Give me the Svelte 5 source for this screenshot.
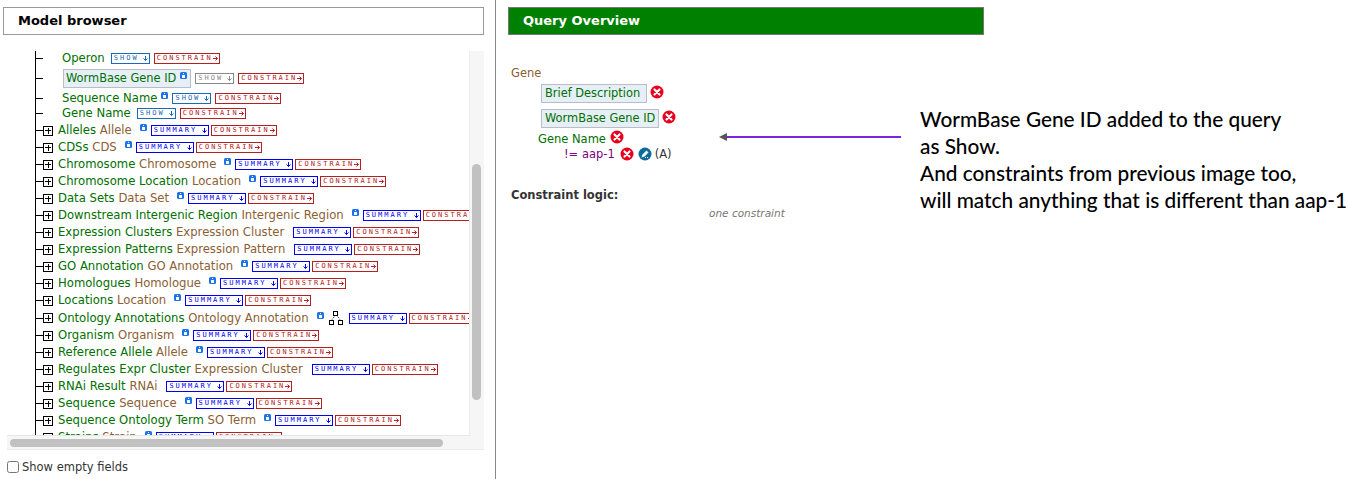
<script lang="ts">
	type Row = { name: string; type?: string; info?: boolean; leaf?: boolean; show?: string; boxed?: boolean; graph?: boolean; h?: number };

	const rows: Row[] = [
		{ name: 'Operon', leaf: true, show: 'blue', h: 15 },
		{ name: 'WormBase Gene ID', leaf: true, info: true, show: 'grey', boxed: true, h: 25 },
		{ name: 'Sequence Name', leaf: true, info: true, show: 'blue', h: 14 },
		{ name: 'Gene Name', leaf: true, show: 'blue', h: 17 },
		{ name: 'Alleles', type: 'Allele', info: true },
		{ name: 'CDSs', type: 'CDS', info: true },
		{ name: 'Chromosome', type: 'Chromosome', info: true },
		{ name: 'Chromosome Location', type: 'Location', info: true },
		{ name: 'Data Sets', type: 'Data Set', info: true },
		{ name: 'Downstream Intergenic Region', type: 'Intergenic Region', info: true },
		{ name: 'Expression Clusters', type: 'Expression Cluster' },
		{ name: 'Expression Patterns', type: 'Expression Pattern' },
		{ name: 'GO Annotation', type: 'GO Annotation', info: true },
		{ name: 'Homologues', type: 'Homologue', info: true },
		{ name: 'Locations', type: 'Location', info: true },
		{ name: 'Ontology Annotations', type: 'Ontology Annotation', info: true, graph: true, h: 18 },
		{ name: 'Organism', type: 'Organism', info: true },
		{ name: 'Reference Allele', type: 'Allele', info: true },
		{ name: 'Regulates Expr Cluster', type: 'Expression Cluster' },
		{ name: 'RNAi Result', type: 'RNAi' },
		{ name: 'Sequence', type: 'Sequence', info: true },
		{ name: 'Sequence Ontology Term', type: 'SO Term', info: true },
		{ name: 'Strains', type: 'Strain', info: true }
	];
</script>

{#snippet info()}
	<svg class="info" width="7" height="7" viewBox="0 0 7 7" aria-hidden="true">
		<rect width="7" height="7" rx="1.5" fill="#1a73e8" />
		<rect x="3" y="1" width="1" height="1" fill="#fff" />
		<rect x="2" y="3" width="3" height="3" fill="#fff" />
	</svg>
{/snippet}

{#snippet remove()}
	<svg class="icon" width="14" height="14" viewBox="0 0 14 14" aria-hidden="true">
		<circle cx="7" cy="7" r="6.5" fill="#e8001c" />
		<path d="M4.5 4.5l5 5M9.5 4.5l-5 5" stroke="#fff" stroke-width="2.2" stroke-linecap="round" />
	</svg>
{/snippet}

{#snippet down()}
	<svg class="glyph" width="5" height="5" viewBox="0 0 5 5" aria-hidden="true">
		<path d="M2.5 0v4.5M0.5 2.5l2 2 2-2" stroke="currentColor" fill="none" />
	</svg>
{/snippet}

{#snippet right()}
	<svg class="glyph" width="5" height="5" viewBox="0 0 5 5" aria-hidden="true">
		<path d="M0 2.5h4.5M2.5 0.5l2 2-2 2" stroke="currentColor" fill="none" />
	</svg>
{/snippet}

<div class="page">
	<section class="browser">
		<h2 class="title">Model browser</h2>
		<div class="scroller">
			<div class="viewport">
				<ul class="tree">
					{#each rows as row}
						<li class="row" class:leaf={row.leaf} style:height={`${row.h ?? 17}px`}>
							<span class="tick"></span>
							{#if row.leaf}
								<span class="leaf-gap"></span>
							{:else}
								<span class="plus"></span>
							{/if}
							<span class="label" class:boxed={row.boxed}>{row.name}{#if row.type}{' '}<span class="type">{row.type}</span>{/if}{#if row.boxed}{@render info()}{/if}</span>
							{#if row.info && !row.boxed}{@render info()}{/if}
							{#if row.graph}
								<svg class="graph" width="14" height="14" viewBox="0 0 14 14" aria-hidden="true">
									<path d="M6 4.5L2.5 9.5M8 4.5L11.5 9.5" stroke="#222" stroke-dasharray="1 1" fill="none" />
									<rect x="4.5" y="0.5" width="4" height="4" fill="#fff" stroke="#000" />
									<rect x="0.5" y="9.5" width="4" height="4" fill="#fff" stroke="#000" />
									<rect x="9.5" y="9.5" width="4" height="4" fill="#fff" stroke="#000" />
								</svg>
							{/if}
							{#if row.leaf}
								<span class="badge show" class:grey={row.show === 'grey'} class:tight={row.info}>SHOW{@render down()}</span>
							{:else}
								<span class="badge summary" class:tight={row.info && !row.graph} class:after-graph={row.graph}>SUMMARY{@render down()}</span>
							{/if}
							<span class="badge constrain" class:wide-gap={row.leaf}>CONSTRAIN{@render right()}</span>
						</li>
					{/each}
				</ul>
			</div>
			<div class="vtrack"><div class="vthumb"></div></div>
			<div class="htrack"><div class="hthumb"></div></div>
		</div>
		<label class="empty"><input type="checkbox" /> Show empty fields</label>
	</section>

	<section class="overview">
		<h2 class="title green">Query Overview</h2>
		<div class="query">
			<div class="root">Gene</div>
			<div class="view first"><span class="field wide">Brief Description</span>{@render remove()}</div>
			<div class="view second"><span class="field">WormBase Gene ID</span>{@render remove()}</div>
			<div class="gene-name">Gene Name {@render remove()}</div>
			<div class="constraint">
				<span class="op">!= aap-1</span>
				{@render remove()}
				<svg class="icon" width="14" height="14" viewBox="0 0 14 14" aria-hidden="true">
					<circle cx="7" cy="7" r="6.5" fill="#0f6a9e" />
					<path d="M3.5 10.5l1-3 4-4 2 2-4 4z" fill="#fff" />
					<path d="M7 10.5h3.5" stroke="#fff" stroke-dasharray="1 1" />
				</svg>
				<span class="code">(A)</span>
			</div>
			<h3 class="logic">Constraint logic:</h3>
			<p class="one">one constraint</p>

			<div class="callout">
				<div class="arrow"><span class="head"></span><span class="shaft"></span></div>
				<p class="note">
					WormBase Gene ID added to the query<br />
					as Show.<br />
					And constraints from previous image too,<br />
					will match anything that is different than aap-1
				</p>
			</div>
		</div>
	</section>
</div>

<style>
	:global(body) {
		margin: 0;
		background: #fff;
	}
	.page {
		display: flex;
		height: 479px;
		overflow: hidden;
		font-family: 'DejaVu Sans', sans-serif;
		font-size: 11.5px;
	}
	.browser {
		width: 496px;
		flex: none;
		box-sizing: border-box;
		border-right: 1px solid #888;
		padding: 7px 0 0 3px;
	}
	.title {
		box-sizing: border-box;
		width: 481px;
		height: 28px;
		margin: 0;
		padding-left: 14px;
		border: 1px solid #999;
		font-size: 13px;
		line-height: 26px;
		font-weight: bold;
		color: #000;
	}
	.green {
		width: 476px;
		background: #008000;
		color: #fff;
		border-color: #777;
	}
	.scroller {
		display: grid;
		grid-template-columns: 462px 15px;
		grid-template-rows: 385px 14px;
		width: 477px;
		margin: 16px 0 0 4px;
	}
	.viewport {
		overflow: hidden;
		border-bottom: 1px solid #e6e6e6;
	}
	.tree {
		list-style: none;
		width: max-content;
		margin: 0 0 0 28px;
		padding: 0;
		border-left: 1px solid #000;
	}
	.row {
		display: flex;
		align-items: center;
		white-space: nowrap;
		font-size: 11.65px;
		color: #007000;
	}
	.tick {
		width: 7px;
		height: 1px;
		background: #000;
		flex: none;
	}
	.leaf-gap {
		width: 19px;
		flex: none;
	}
	.plus {
		box-sizing: border-box;
		width: 10px;
		height: 10px;
		margin-right: 5px;
		flex: none;
		border: 1px solid #000;
		background:
			linear-gradient(#000, #000) center / 6px 1px no-repeat,
			linear-gradient(#000, #000) center / 1px 6px no-repeat;
	}
	.label {
		line-height: 15px;
	}
	.type {
		color: #8b5e34;
	}
	.boxed {
		display: inline-flex;
		box-sizing: border-box;
		align-items: center;
		height: 19px;
		padding: 0 3px 0 2px;
		margin-left: 1px;
		font-size: 11.4px;
		background: #e6eff8;
		border: 1px solid #b8bfc4;
	}
	.row .boxed :global(.info) {
		margin: -6px 0 0 4px;
	}
	.info {
		flex: none;
		margin: -6px 0 0 8px;
	}
	.leaf .info {
		margin-left: 4px;
	}
	.badge {
		box-sizing: border-box;
		display: inline-flex;
		align-items: center;
		justify-content: space-between;
		flex: none;
		height: 11px;
		margin-left: 6px;
		padding: 0 1px 0 2px;
		border: 1px solid currentColor;
		font-family: 'DejaVu Sans Mono', monospace;
		font-size: 7px;
		line-height: 9px;
		letter-spacing: 2px;
		overflow: hidden;
		background: #fff;
	}
	.summary {
		margin-left: 9px;
	}
	.tight {
		margin-left: 4px;
	}
	.after-graph {
		margin-left: 6px;
	}
	.show {
		width: 39px;
		color: #1b69b8;
	}
	.grey {
		color: #8a8a8a;
	}
	.summary {
		width: 58px;
		color: #0000f0;
	}
	.constrain {
		width: 66px;
		margin-left: 2px;
		color: #b22222;
	}
	.wide-gap {
		margin-left: 4px;
	}
	.glyph {
		flex: none;
	}
	.graph {
		flex: none;
		margin-left: 5px;
	}
	.vtrack {
		background: #f6f6f6;
		border-left: 1px solid #ececec;
		padding: 113px 3px 0 2px;
	}
	.vthumb {
		height: 236px;
		border-radius: 5px;
		background: #c1c1c1;
	}
	.htrack {
		grid-column: 1 / 3;
		box-sizing: border-box;
		background: #f6f6f6;
		border-bottom: 1px solid #ececec;
		padding: 3px 0 0 3px;
	}
	.hthumb {
		width: 433px;
		height: 8px;
		border-radius: 4px;
		background: #c1c1c1;
	}
	.empty {
		display: flex;
		align-items: center;
		gap: 3px;
		margin: 10px 0 0 4px;
		color: #333;
	}
	.empty input {
		width: 12px;
		height: 12px;
		margin: 0;
	}
	.overview {
		flex: 1;
		padding: 7px 0 0 12px;
	}
	.query {
		position: relative;
		padding-top: 31px;
		color: #007000;
	}
	.root {
		margin-left: 3px;
		line-height: 15px;
		color: #8b5e34;
	}
	.view {
		display: flex;
		align-items: center;
		margin-left: 33px;
	}
	.first {
		margin-top: 3px;
	}
	.second {
		margin-top: 6px;
	}
	.field {
		box-sizing: border-box;
		height: 19px;
		padding: 0 3px;
		font-size: 11.4px;
		line-height: 17px;
		background: #e6eff8;
		border: 1px solid #b8bfc4;
	}
	.wide {
		padding: 0 6px 0 3px;
	}
	.view .icon {
		margin: -3px 0 0 3px;
	}
	.gene-name {
		display: flex;
		align-items: center;
		gap: 4px;
		height: 15px;
		margin: 3px 0 0 30px;
	}
	.gene-name .icon {
		margin-top: -3px;
	}
	.constraint {
		display: flex;
		align-items: center;
		gap: 4px;
		height: 16px;
		margin-left: 56px;
		color: #800080;
	}
	.op {
		margin-right: 1px;
	}
	.code {
		color: #333;
		margin-left: -1px;
	}
	.logic {
		margin: 26px 0 0 3px;
		font-size: 11.5px;
		line-height: 15px;
		color: #333;
	}
	.one {
		margin: 3px 0 0 201px;
		font-size: 10.5px;
		line-height: 14px;
		font-style: italic;
		color: #777;
	}
	.callout {
		position: absolute;
		left: 211px;
		top: 70px;
		display: flex;
		align-items: flex-start;
		gap: 19px;
	}
	.arrow {
		display: flex;
		align-items: center;
		margin-top: 28px;
		width: 182px;
	}
	.head {
		border-style: solid;
		border-width: 4px 8px 4px 0;
		border-color: transparent #555 transparent transparent;
	}
	.shaft {
		flex: 1;
		height: 2px;
		background: #7f22e0;
	}
	.note {
		margin: 0;
		font-family: Lato, sans-serif;
		font-size: 20.8px;
		font-weight: 500;
		line-height: 27px;
		white-space: nowrap;
		color: #000;
	}
</style>
